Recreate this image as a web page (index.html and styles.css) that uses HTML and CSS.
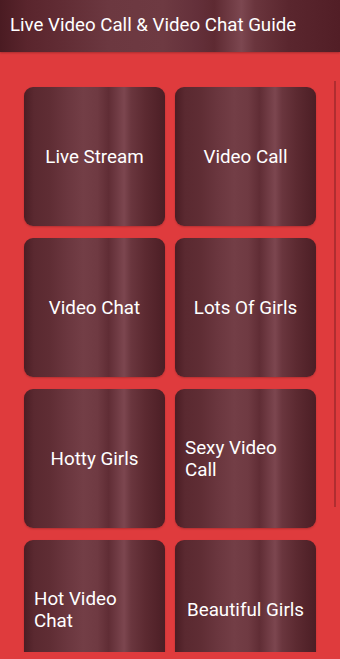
FILE: index.html
```html
<!DOCTYPE html>
<html>
<head>
<meta charset="utf-8">
<link rel="stylesheet" href="styles.css">
</head>
<body>
<div class="app">
  <header class="appbar">
    <h1 class="title">Live Video Call &amp; Video Chat Guide</h1>
  </header>
  <main class="scroller">
    <div class="grid">
      <div class="card"><span class="label">Live Stream</span></div>
      <div class="card"><span class="label">Video Call</span></div>
      <div class="card"><span class="label">Video Chat</span></div>
      <div class="card"><span class="label">Lots Of Girls</span></div>
      <div class="card"><span class="label">Hotty Girls</span></div>
      <div class="card"><span class="label">Sexy Video Call</span></div>
      <div class="card"><span class="label">Hot Video Chat</span></div>
      <div class="card"><span class="label">Beautiful Girls</span></div>
    </div>
    <div class="thumb"></div>
  </main>
  <div class="bottom-space"></div>
</div>
</body>
</html>
```
FILE: styles.css
```css
* { box-sizing: border-box; }
html, body {
  margin: 0;
  padding: 0;
  background: #df3b3d;
  font-family: Roboto, "Noto Sans", sans-serif;
}
.app {
  width: 340px;
  height: 659px;
  overflow: hidden;
  display: flex;
  flex-direction: column;
  background: #df3b3d;
}
.appbar {
  flex: 0 0 52px;
  display: flex;
  align-items: center;
  padding: 0 10px 3px;
  background: linear-gradient(to right,
    #4a1b22 0%,
    #5a252d 8%,
    #612c34 18%,
    #6c3840 32%,
    #6e3a42 48%,
    #64303a 58%,
    #5e2a32 63%,
    #7c4750 71%,
    #6a353d 75%,
    #5a262e 85%,
    #521e26 100%);
  box-shadow: 0 1px 2px rgba(0,0,0,0.25);
  position: relative;
  z-index: 1;
}
.title {
  margin: 0;
  color: #ffffff;
  font-size: 18.7px;
  font-weight: 400;
  white-space: nowrap;
}
.scroller {
  flex: 0 0 600px;
  position: relative;
  overflow: hidden;
}
.bottom-space {
  flex: 1 1 auto;
}
.grid {
  display: grid;
  grid-template-columns: 141px 141px;
  grid-auto-rows: 139px;
  column-gap: 10px;
  row-gap: 12px;
  padding: 35px 24px 0;
}
.card {
  border-radius: 9px;
  display: flex;
  align-items: center;
  justify-content: center;
  padding: 0 10px;
  background: linear-gradient(to right,
    #4b1d24 0%,
    #5a2930 7%,
    #5f2d34 18%,
    #6a363e 30%,
    #733e46 42%,
    #6f3a42 52%,
    #602d35 60%,
    #7c464f 71%,
    #6a363e 76%,
    #5c2a31 86%,
    #4c1e25 100%);
  box-shadow: 0 1px 2px rgba(0,0,0,0.2);
}
.label {
  display: inline-block;
  max-width: 121px;
  color: #ffffff;
  font-size: 18.8px;
  line-height: 22px;
  text-align: left;
}
.thumb {
  position: absolute;
  right: 4px;
  top: 29px;
  width: 2px;
  height: 426px;
  background: rgba(90, 20, 25, 0.35);
}
```
